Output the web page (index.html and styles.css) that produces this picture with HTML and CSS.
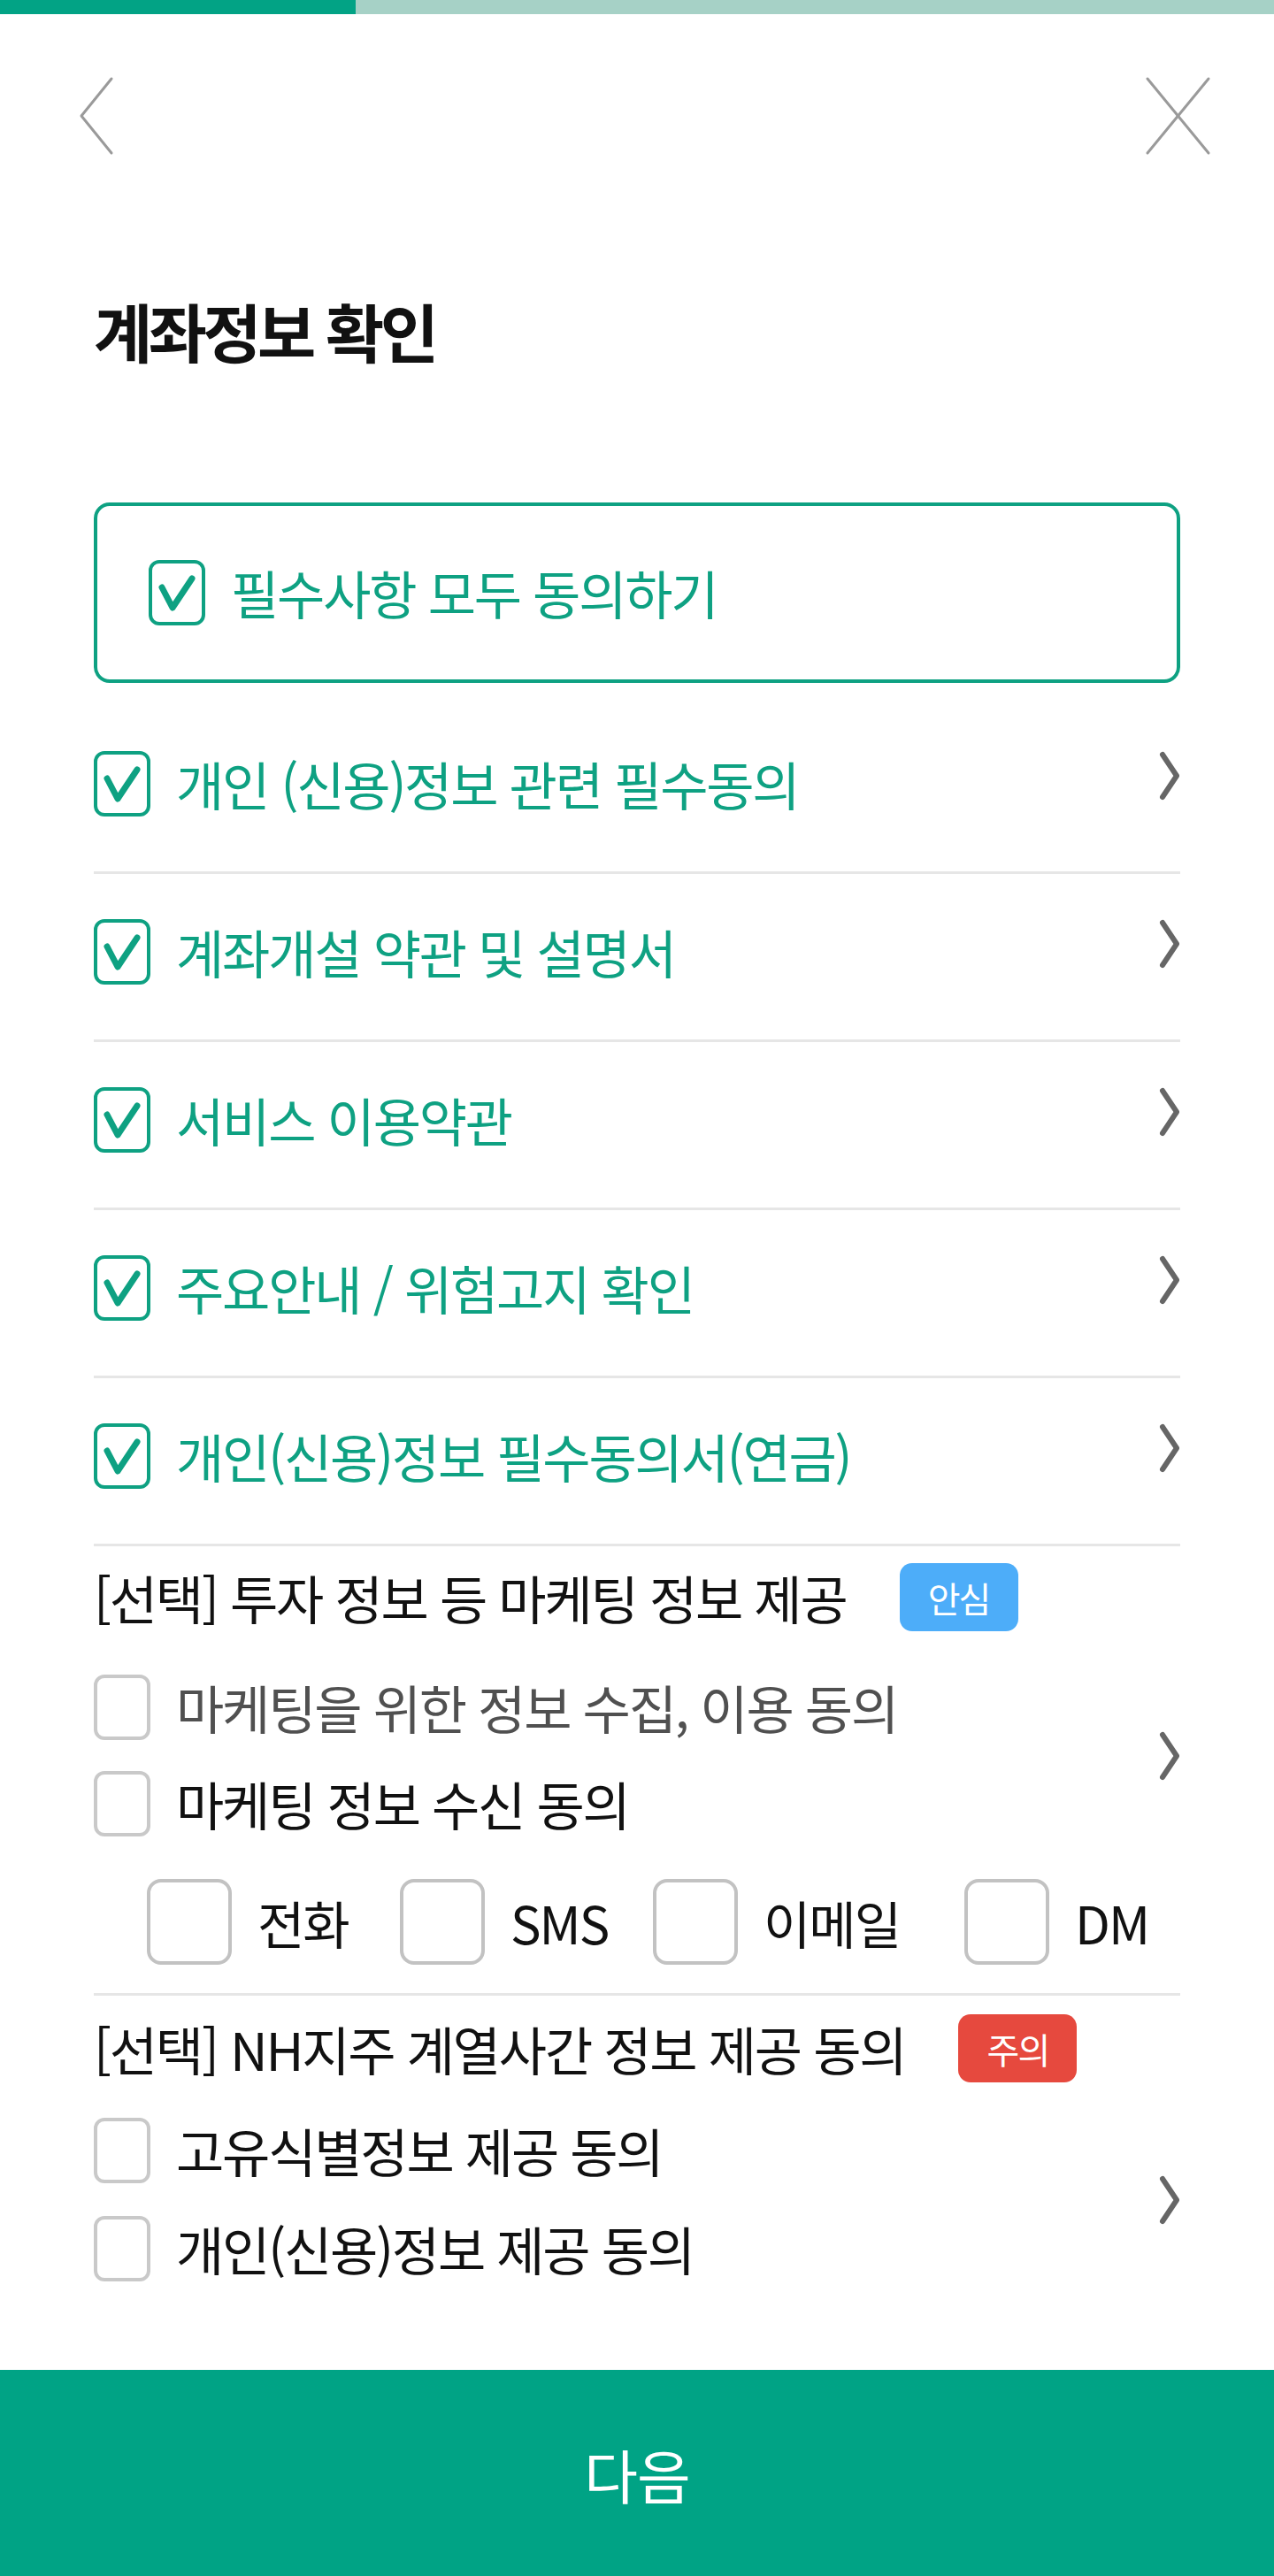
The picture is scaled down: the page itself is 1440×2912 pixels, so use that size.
FILE: index.html
```html
<!DOCTYPE html>
<html lang="ko">
<head>
<meta charset="utf-8">
<title>계좌정보 확인</title>
<link rel="stylesheet" href="styles.css">
</head>
<body>
<div class="page">
  <div class="progress"><div class="progress-fill"></div></div>

  <header class="topbar">
    <svg class="icon-back" viewBox="0 0 34 84"><polyline points="34,0 0,42 34,84"/></svg>
    <svg class="icon-close" viewBox="0 0 69 84"><line x1="0" y1="0" x2="69" y2="84"/><line x1="69" y1="0" x2="0" y2="84"/></svg>
  </header>

  <main class="content">
    <h1 class="title">계좌정보 확인</h1>

    <div class="agree-all">
      <svg class="cb" viewBox="0 0 64 74"><rect class="cb-box" x="2" y="2" width="60" height="70" rx="10"/><polyline class="cb-check" points="15,31 27,54 49,21"/></svg>
      <span class="agree-all-label">필수사항 모두 동의하기</span>
    </div>

    <ul class="terms">
      <li class="term">
        <svg class="cb" viewBox="0 0 64 74"><rect class="cb-box" x="2" y="2" width="60" height="70" rx="10"/><polyline class="cb-check" points="15,31 27,54 49,21"/></svg>
        <span class="term-label">개인 (신용)정보 관련 필수동의</span>
        <svg class="chev chev-up" viewBox="0 0 24 56"><polyline points="4,4 20,28 4,52"/></svg>
      </li>
      <li class="term">
        <svg class="cb" viewBox="0 0 64 74"><rect class="cb-box" x="2" y="2" width="60" height="70" rx="10"/><polyline class="cb-check" points="15,31 27,54 49,21"/></svg>
        <span class="term-label">계좌개설 약관 및 설명서</span>
        <svg class="chev chev-up" viewBox="0 0 24 56"><polyline points="4,4 20,28 4,52"/></svg>
      </li>
      <li class="term">
        <svg class="cb" viewBox="0 0 64 74"><rect class="cb-box" x="2" y="2" width="60" height="70" rx="10"/><polyline class="cb-check" points="15,31 27,54 49,21"/></svg>
        <span class="term-label">서비스 이용약관</span>
        <svg class="chev chev-up" viewBox="0 0 24 56"><polyline points="4,4 20,28 4,52"/></svg>
      </li>
      <li class="term">
        <svg class="cb" viewBox="0 0 64 74"><rect class="cb-box" x="2" y="2" width="60" height="70" rx="10"/><polyline class="cb-check" points="15,31 27,54 49,21"/></svg>
        <span class="term-label">주요안내 / 위험고지 확인</span>
        <svg class="chev chev-up" viewBox="0 0 24 56"><polyline points="4,4 20,28 4,52"/></svg>
      </li>
      <li class="term">
        <svg class="cb" viewBox="0 0 64 74"><rect class="cb-box" x="2" y="2" width="60" height="70" rx="10"/><polyline class="cb-check" points="15,31 27,54 49,21"/></svg>
        <span class="term-label">개인(신용)정보 필수동의서(연금)</span>
        <svg class="chev chev-up" viewBox="0 0 24 56"><polyline points="4,4 20,28 4,52"/></svg>
      </li>
    </ul>

    <section class="opt opt-marketing">
      <div class="opt-head">
        <span class="opt-title">[선택] 투자 정보 등 마케팅 정보 제공</span>
        <span class="badge badge-safe">안심</span>
      </div>
      <div class="opt-body">
        <div class="opt-items">
          <div class="opt-item"><span class="cb-empty"></span><span class="opt-label opt-label-muted">마케팅을 위한 정보 수집, 이용 동의</span></div>
          <div class="opt-item"><span class="cb-empty"></span><span class="opt-label">마케팅 정보 수신 동의</span></div>
        </div>
        <svg class="chev" viewBox="0 0 24 56"><polyline points="4,4 20,28 4,52"/></svg>
      </div>
      <div class="channels">
        <div class="channel"><span class="cb-square"></span><span class="channel-label">전화</span></div>
        <div class="channel"><span class="cb-square"></span><span class="channel-label">SMS</span></div>
        <div class="channel"><span class="cb-square"></span><span class="channel-label">이메일</span></div>
        <div class="channel"><span class="cb-square"></span><span class="channel-label">DM</span></div>
      </div>
    </section>

    <section class="opt opt-affiliate">
      <div class="opt-head">
        <span class="opt-title">[선택] NH지주 계열사간 정보 제공 동의</span>
        <span class="badge badge-warn">주의</span>
      </div>
      <div class="opt-body">
        <div class="opt-items">
          <div class="opt-item"><span class="cb-empty"></span><span class="opt-label">고유식별정보 제공 동의</span></div>
          <div class="opt-item"><span class="cb-empty"></span><span class="opt-label">개인(신용)정보 제공 동의</span></div>
        </div>
        <svg class="chev" viewBox="0 0 24 56"><polyline points="4,4 20,28 4,52"/></svg>
      </div>
    </section>
  </main>

  <button class="next" type="button">다음</button>
</div>
</body>
</html>
```

FILE: styles.css
```css
* { box-sizing: border-box; }

html, body {
  margin: 0;
  padding: 0;
  background: #ffffff;
}

body {
  font-family: "Noto Sans CJK KR", "Noto Sans", sans-serif;
  color: #111111;
}

.page {
  width: 1440px;
  min-height: 2912px;
  display: flex;
  flex-direction: column;
}

/* progress */
.progress {
  height: 16px;
  background: #a6d1c6;
}
.progress-fill {
  width: 402px;
  height: 100%;
  background: #02a385;
}

/* top bar */
.topbar {
  display: flex;
  justify-content: space-between;
  align-items: flex-start;
  padding: 73px 74px 0 92px;
}
.icon-back {
  width: 34px;
  height: 84px;
  overflow: visible;
}
.icon-close {
  width: 69px;
  height: 84px;
  overflow: visible;
}
.icon-back polyline,
.icon-close line {
  fill: none;
  stroke: #9a9a9a;
  stroke-width: 3;
  stroke-linecap: round;
  stroke-linejoin: round;
}

/* content */
.content {
  flex: 1;
  padding: 0 106px;
}

.title {
  margin: 160px 0 0;
  font-size: 72px;
  line-height: 80px;
  font-weight: 700;
  letter-spacing: -4.6px;
  color: #111111;
}

/* checkbox (checked) */
.cb {
  flex: none;
  width: 64px;
  height: 74px;
}
.cb-box {
  fill: #ffffff;
  stroke: #0ea182;
  stroke-width: 4;
}
.cb-check {
  fill: none;
  stroke: #0ea182;
  stroke-width: 7;
  stroke-linecap: round;
  stroke-linejoin: round;
}

/* empty checkboxes */
.cb-empty {
  flex: none;
  width: 64px;
  height: 74px;
  border: 4px solid #c9c9c9;
  border-radius: 12px;
}
.cb-square {
  flex: none;
  width: 96px;
  height: 97px;
  border: 4px solid #c2c2c2;
  border-radius: 16px;
}

/* agree all */
.agree-all {
  margin-top: 155px;
  height: 204px;
  border: 4px solid #0ea182;
  border-radius: 18px;
  display: flex;
  align-items: center;
  gap: 29px;
  padding-left: 58px;
}
.agree-all-label,
.term-label {
  font-size: 59px;
  line-height: 74px;
  letter-spacing: -2.2px;
  color: #0ea182;
}

/* term rows */
.terms {
  list-style: none;
  margin: 26px 0 0;
  padding: 0;
}
.term {
  display: flex;
  align-items: center;
  gap: 29px;
  padding: 51px 0 62px;
  border-bottom: 3px solid #e6e6e6;
}
.term-label {
  flex: 1;
}

.chev {
  flex: none;
  width: 24px;
  height: 56px;
}
.chev polyline {
  fill: none;
  stroke: #666666;
  stroke-width: 6;
  stroke-linecap: round;
  stroke-linejoin: round;
}
.chev-up {
  margin-bottom: 18px;
}

/* optional sections */
.opt-marketing {
  padding: 19px 0 32px;
  border-bottom: 3px solid #e6e6e6;
}
.opt-affiliate {
  padding: 21px 0 40px;
}

.opt-head {
  display: flex;
  align-items: center;
  gap: 60px;
  height: 77px;
}
.opt-title {
  font-size: 59px;
  line-height: 74px;
  letter-spacing: -2.2px;
  color: #111111;
}
.badge {
  width: 134px;
  height: 77px;
  border-radius: 14px;
  display: flex;
  align-items: center;
  justify-content: center;
  font-size: 40px;
  letter-spacing: -2px;
  color: #ffffff;
}
.badge-safe { background: #4dadf9; }
.badge-warn { background: #e6493e; }

.opt-body {
  display: flex;
  align-items: center;
}
.opt-marketing .opt-body { margin-top: 49px; }
.opt-affiliate .opt-body { margin-top: 40px; }

.opt-items {
  flex: 1;
  display: flex;
  flex-direction: column;
}
.opt-marketing .opt-items { gap: 35px; }
.opt-affiliate .opt-items { gap: 37px; }

.opt-item {
  display: flex;
  align-items: center;
  gap: 29px;
}
.opt-label {
  font-size: 59px;
  line-height: 74px;
  letter-spacing: -2.2px;
  color: #111111;
}
.opt-label-muted {
  color: #505050;
}

.channels {
  display: grid;
  grid-template-columns: 286px 286px 352px auto;
  margin-top: 48px;
  padding-left: 60px;
}
.channel {
  display: flex;
  align-items: center;
  gap: 29px;
}
.channel-label {
  font-size: 58px;
  line-height: 74px;
  letter-spacing: -2px;
  color: #111111;
}

/* next button */
.next {
  display: block;
  width: 100%;
  height: 233px;
  border: none;
  margin: 0;
  padding: 0;
  background: #00a385;
  color: #ffffff;
  font-family: "Noto Sans CJK KR", "Noto Sans", sans-serif;
  font-size: 66px;
  letter-spacing: -1px;
}
```
